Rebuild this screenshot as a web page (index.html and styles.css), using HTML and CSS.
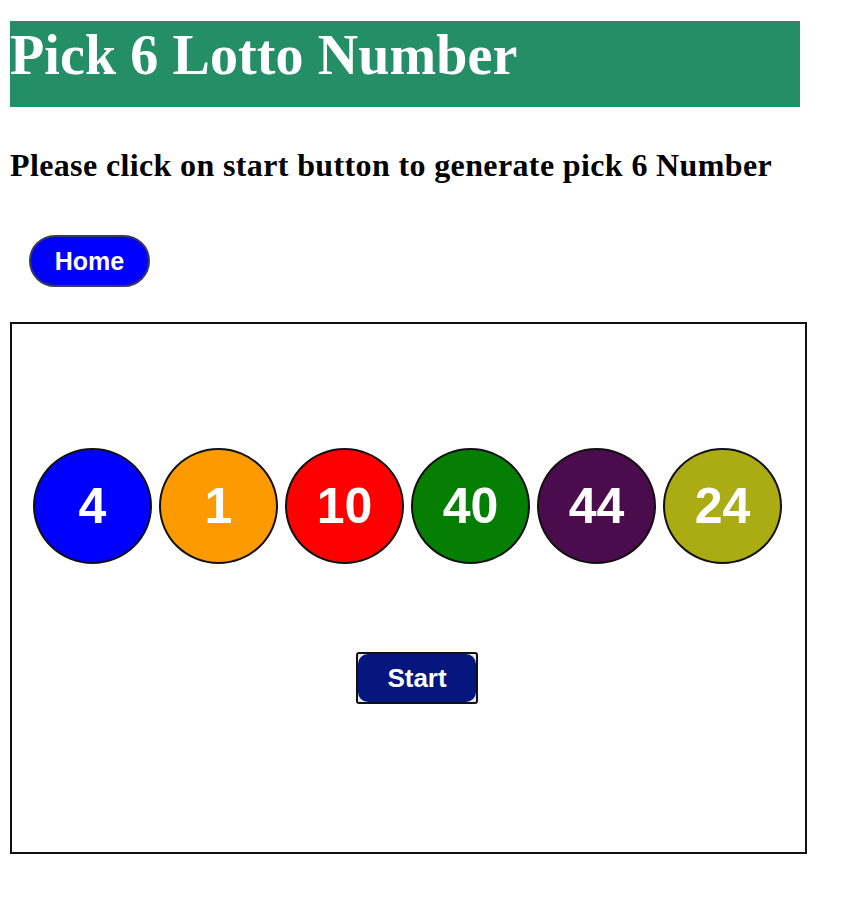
FILE: index.html
```html
<!DOCTYPE html>
<html lang="en">
<head>
<meta charset="utf-8">
<title>Pick 6 Lotto Number</title>
<link rel="stylesheet" href="styles.css">
</head>
<body>
<h1 class="title">Pick 6 Lotto Number</h1>
<p class="intro">Please click on start button to generate pick 6 Number</p>
<div class="nav">
  <button class="home-btn" type="button">Home</button>
</div>
<div class="board">
  <div class="balls">
    <div class="ball ball-blue">4</div>
    <div class="ball ball-orange">1</div>
    <div class="ball ball-red">10</div>
    <div class="ball ball-green">40</div>
    <div class="ball ball-purple">44</div>
    <div class="ball ball-olive">24</div>
  </div>
  <div class="controls">
    <button class="start-btn" type="button"><span class="start-inner">Start</span></button>
  </div>
</div>
</body>
</html>
```
FILE: styles.css
```css
html, body {
  background: #ffffff;
}
body {
  margin: 0;
  padding: 21px 10px 0 10px;
  font-family: "Liberation Serif", "Times New Roman", serif;
  color: #000;
}
.title {
  box-sizing: border-box;
  width: 790px;
  height: 86px;
  margin: 0;
  padding-top: 2px;
  background: #248f66;
  color: #ffffff;
  font-family: "Liberation Serif", "Times New Roman", serif;
  font-weight: bold;
  font-size: 56px;
  letter-spacing: 0.1px;
  line-height: normal;
  white-space: nowrap;
}
.intro {
  margin: 40px 0 0 0;
  font-size: 32px;
  font-weight: bold;
  letter-spacing: 0.37px;
  line-height: normal;
  white-space: nowrap;
}
.nav {
  margin-top: 51px;
  padding-left: 19px;
}
.home-btn {
  box-sizing: border-box;
  width: 121px;
  height: 52px;
  border: 2px solid #3a3a5a;
  border-radius: 26px;
  background: #0000ff;
  color: #ffffff;
  font-family: "Liberation Sans", Arial, sans-serif;
  font-weight: bold;
  font-size: 25px;
  padding: 0;
  display: flex;
  align-items: center;
  justify-content: center;
}
.board {
  box-sizing: border-box;
  width: 797px;
  height: 532px;
  margin-top: 35px;
  border: 2px solid #111;
  padding-top: 124px;
}
.balls {
  display: flex;
  justify-content: center;
  gap: 7px;
  padding-right: 2px;
}
.ball {
  box-sizing: border-box;
  width: 119px;
  height: 116px;
  border-radius: 50%;
  border: 2px solid #111;
  color: #ffffff;
  font-family: "Liberation Sans", Arial, sans-serif;
  font-weight: bold;
  font-size: 50px;
  display: flex;
  align-items: center;
  justify-content: center;
}
.ball-blue { background: #0000ff; }
.ball-orange { background: #fd9a00; }
.ball-red { background: #ff0000; }
.ball-green { background: #047f04; }
.ball-purple { background: #4a0c4c; }
.ball-olive { background: #abab14; }
.controls {
  display: flex;
  justify-content: center;
  margin-top: 88px;
  padding-left: 17px;
}
.start-btn {
  box-sizing: border-box;
  width: 122px;
  height: 52px;
  padding: 0;
  border: 2px solid #111;
  border-radius: 3px;
  background: #e8e8ee;
  display: flex;
}
.start-inner {
  flex: 1;
  display: flex;
  align-items: center;
  justify-content: center;
  background: #06167f;
  border-radius: 10px;
  color: #ffffff;
  font-family: "Liberation Sans", Arial, sans-serif;
  font-weight: bold;
  font-size: 26px;
}
```
